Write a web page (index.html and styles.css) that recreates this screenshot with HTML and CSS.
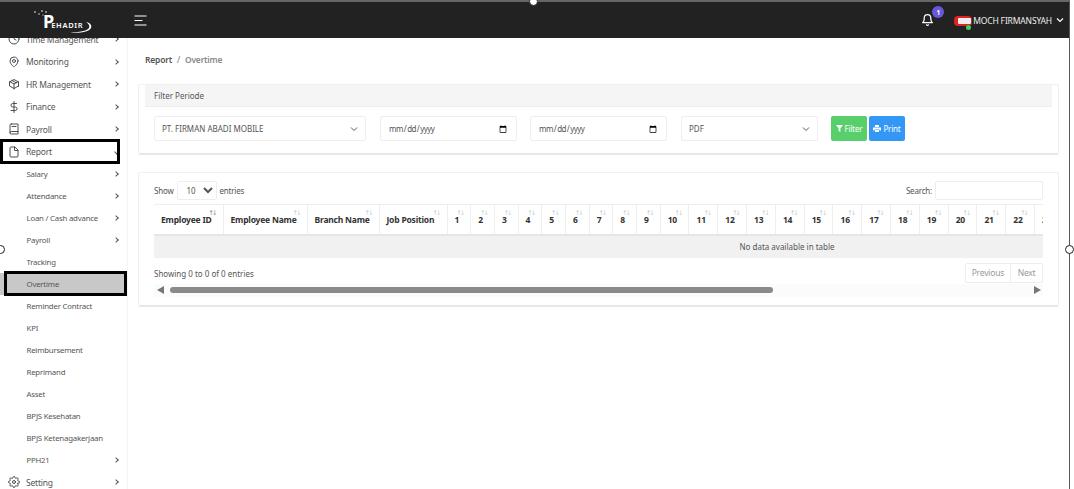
FILE: index.html
```html
<!DOCTYPE html>
<html lang="id">
<head>
<meta charset="utf-8">
<title>Report Overtime</title>
<link rel="stylesheet" href="styles.css">
</head>
<body>
<div class="frame">
  <div class="app">
    <header class="topbar">
      <div class="logo">
        <svg class="logo-art" width="62" height="28" viewBox="0 0 62 28"><g fill="#fff"><circle cx="2" cy="3" r=".8"/><circle cx="6" cy="5" r=".7"/><circle cx="9" cy="2" r=".8"/><circle cx="13" cy="3" r=".8"/><circle cx="10" cy="6" r=".6"/></g><path d="M53 13c5 1 6 4 5 6-2 4-10 5-21 5 9-1 17-2 19-5 1-2 0-4-3-6z" fill="#fff"/></svg>
        <span class="logo-p">P</span><span class="logo-text">EHADIR</span>
      </div>
      <svg class="burger" width="13" height="11" viewBox="0 0 13 11"><path d="M.5 1h12M.5 5.500h8M.5 10h12" stroke="#fff" stroke-width="1.200" fill="none"/></svg>
      <div class="top-right">
        <div class="bell">
          <svg width="13" height="14" viewBox="0 0 24 24" fill="none" stroke="#fff" stroke-width="2.200" stroke-linecap="round" stroke-linejoin="round"><path d="M18 8a6 6 0 0 0-12 0c0 7-3 9-3 9h18s-3-2-3-9"/><path d="M13.700 21a2 2 0 0 1-3.400 0"/></svg>
          <span class="badge">1</span>
        </div>
        <div class="avatar"><span class="avatar-in"></span><span class="avatar-dot"></span></div>
        <span class="user">MOCH FIRMANSYAH</span>
        <svg width="8" height="6" viewBox="0 0 8 6"><path d="M1 1.500l3 3 3-3" stroke="#fff" stroke-width="1.200" fill="none"/></svg>
      </div>
    </header>
    <div class="body">
      <nav class="sidebar">
        <ul class="menu">
          <li class="item"><svg class="ico" viewBox="0 0 24 24"><circle cx="12" cy="12" r="10"/><path d="M12 6v6l4 2"/></svg><span>Time Management</span><i class="chev"></i></li>
          <li class="item"><svg class="ico" viewBox="0 0 24 24"><path d="M20 10c0 6-8 12-8 12s-8-6-8-12a8 8 0 0 1 16 0z"/><circle cx="12" cy="10" r="3"/></svg><span>Monitoring</span><i class="chev"></i></li>
          <li class="item"><svg class="ico" viewBox="0 0 24 24"><path d="M21 16V8l-9-5-9 5v8l9 5 9-5z"/><path d="M3.300 7L12 12l8.700-5M12 22V12M7.500 4.500l9 5.200"/></svg><span>HR Management</span><i class="chev"></i></li>
          <li class="item"><svg class="ico" viewBox="0 0 24 24"><path d="M12 1v22M17 5H9.500a3.500 3.500 0 0 0 0 7h5a3.500 3.500 0 0 1 0 7H6"/></svg><span>Finance</span><i class="chev"></i></li>
          <li class="item"><svg class="ico" viewBox="0 0 24 24"><path d="M4 19.500A2.500 2.500 0 0 1 6.500 17H20"/><path d="M6.500 2H20v20H6.500A2.500 2.500 0 0 1 4 19.500v-15A2.500 2.500 0 0 1 6.500 2z"/><path d="M8 7h8"/></svg><span>Payroll</span><i class="chev"></i></li>
          <li class="item"><svg class="ico" viewBox="0 0 24 24"><path d="M13 2H6a2 2 0 0 0-2 2v16a2 2 0 0 0 2 2h12a2 2 0 0 0 2-2V9z"/><path d="M13 2v7h7"/></svg><span>Report</span><i class="chev chev-down"></i></li>
        </ul>
        <ul class="submenu">
          <li class="sub"><span>Salary</span><i class="chev"></i></li>
          <li class="sub"><span>Attendance</span><i class="chev"></i></li>
          <li class="sub"><span>Loan / Cash advance</span><i class="chev"></i></li>
          <li class="sub"><span>Payroll</span><i class="chev"></i></li>
          <li class="sub"><span>Tracking</span></li>
          <li class="sub active"><span>Overtime</span></li>
          <li class="sub"><span>Reminder Contract</span></li>
          <li class="sub"><span>KPI</span></li>
          <li class="sub"><span>Reimbursement</span></li>
          <li class="sub"><span>Reprimand</span></li>
          <li class="sub"><span>Asset</span></li>
          <li class="sub"><span>BPJS Kesehatan</span></li>
          <li class="sub"><span>BPJS Ketenagakerjaan</span></li>
          <li class="sub"><span>PPH21</span><i class="chev"></i></li>
        </ul>
        <ul class="menu">
          <li class="item"><svg class="ico" viewBox="0 0 24 24"><circle cx="12" cy="12" r="3"/><path d="M19.400 15a1.650 1.650 0 0 0 .33 1.820l.06.06a2 2 0 1 1-2.830 2.830l-.06-.06a1.650 1.650 0 0 0-2.820 1.170V21a2 2 0 0 1-4 0v-.09A1.650 1.650 0 0 0 7.260 19.700l-.06.06a2 2 0 1 1-2.830-2.830l.06-.06A1.650 1.650 0 0 0 3.260 14H3a2 2 0 0 1 0-4h.09A1.650 1.650 0 0 0 4.300 7.260l-.06-.06a2 2 0 1 1 2.830-2.830l.06.06A1.650 1.650 0 0 0 10 3.260V3a2 2 0 0 1 4 0v.09a1.650 1.650 0 0 0 2.820 1.170l.06-.06a2 2 0 1 1 2.830 2.830l-.06.06A1.650 1.650 0 0 0 20.740 10H21a2 2 0 0 1 0 4h-.09a1.650 1.650 0 0 0-1.510 1z"/></svg><span>Setting</span><i class="chev"></i></li>
        </ul>
      </nav>
      <main class="main">
        <div class="crumb"><b>Report</b><span class="sep">/</span><span class="crumb-cur">Overtime</span></div>
        <section class="card filter-card">
          <div class="card-head">Filter Periode</div>
          <form class="filters">
            <select class="field f-company"><option>PT. FIRMAN ABADI MOBILE</option></select>
            <input class="field f-date" type="date">
            <input class="field f-date" type="date">
            <select class="field f-format"><option>PDF</option></select>
            <div class="btns">
              <button type="button" class="btn btn-green"><svg width="7" height="7" viewBox="0 0 8 8"><path d="M0 0h8L5 3.600V8L3 6.800V3.600z" fill="#fff"/></svg>Filter</button>
              <button type="button" class="btn btn-blue"><svg width="8" height="7" viewBox="0 0 8 7"><path d="M2 0h4v2H2zM0 2.500h8V5.500H6.500V4.500h-5v1H0zM2 5h4v2H2z" fill="#fff"/></svg>Print</button>
            </div>
          </form>
        </section>
        <section class="card table-card">
          <div class="tbl-top">
            <label class="len">Show <select class="len-sel"><option>10</option></select> entries</label>
            <label class="search">Search: <input class="search-in" type="text"></label>
          </div>
          <div class="tbl-wrap">
            <div class="tbl-inner">
            <table class="tbl">
              <thead>
                <tr>
                  <th class="w-id">Employee ID<i class="sort sort-on">↑↓</i></th>
                  <th class="w-name">Employee Name<i class="sort">↑↓</i></th>
                  <th class="w-branch">Branch Name<i class="sort">↑↓</i></th>
                  <th class="w-job">Job Position<i class="sort">↑↓</i></th>
                  <th class="w-s">1<i class="sort">↑↓</i></th>
                  <th class="w-s">2<i class="sort">↑↓</i></th>
                  <th class="w-s">3<i class="sort">↑↓</i></th>
                  <th class="w-s">4<i class="sort">↑↓</i></th>
                  <th class="w-s">5<i class="sort">↑↓</i></th>
                  <th class="w-s">6<i class="sort">↑↓</i></th>
                  <th class="w-s">7<i class="sort">↑↓</i></th>
                  <th class="w-s">8<i class="sort">↑↓</i></th>
                  <th class="w-s">9<i class="sort">↑↓</i></th>
                  <th class="w-l">10<i class="sort">↑↓</i></th>
                  <th class="w-l">11<i class="sort">↑↓</i></th>
                  <th class="w-l">12<i class="sort">↑↓</i></th>
                  <th class="w-l">13<i class="sort">↑↓</i></th>
                  <th class="w-l">14<i class="sort">↑↓</i></th>
                  <th class="w-l">15<i class="sort">↑↓</i></th>
                  <th class="w-l">16<i class="sort">↑↓</i></th>
                  <th class="w-l">17<i class="sort">↑↓</i></th>
                  <th class="w-l">18<i class="sort">↑↓</i></th>
                  <th class="w-l">19<i class="sort">↑↓</i></th>
                  <th class="w-l">20<i class="sort">↑↓</i></th>
                  <th class="w-l">21<i class="sort">↑↓</i></th>
                  <th class="w-l">22<i class="sort">↑↓</i></th>
                  <th class="w-l">23<i class="sort">↑↓</i></th>
                </tr>
              </thead>
            </table>
            <div class="empty">No data available in table</div>
            </div>
          </div>
          <div class="tbl-bottom">
            <span class="info">Showing 0 to 0 of 0 entries</span>
            <div class="pager"><span class="pg">Previous</span><span class="pg">Next</span></div>
          </div>
          <div class="hscroll">
            <i class="tri tri-l"></i>
            <div class="track"><div class="thumb"></div></div>
            <i class="tri tri-r"></i>
          </div>
        </section>
      </main>
    </div>
  </div>
  <div class="mark mark-report"></div>
  <div class="mark mark-overtime"></div>
  <i class="handle h-top"></i>
  <i class="handle h-left"></i>
  <i class="handle h-right"></i>
</div>
</body>
</html>
```

FILE: styles.css
```css
* { box-sizing: border-box; }
html, body { margin: 0; padding: 0; background: #fff; }
body { font-family: "Noto Sans", "Open Sans", sans-serif; font-size: 8.5px; letter-spacing: -.2px; color: #555; }
ul { list-style: none; margin: 0; padding: 0; }

.frame { position: relative; width: 1074px; height: 489px; overflow: hidden; background: #fff; }
.app { width: 1070px; height: 489px; border-right: 1px solid #555; border-top: 2px solid #666; display: flex; flex-direction: column; }

.topbar { height: 36px; flex: none; background: #222; display: flex; align-items: center; position: relative; z-index: 2; }
.logo { position: relative; width: 134px; height: 36px; color: #fff; padding: 9px 0 0 43px; display: flex; align-items: baseline; flex: none; }
.logo-art { position: absolute; left: 33px; top: 7px; }
.logo-p { font-size: 18px; font-weight: 700; line-height: 20px; letter-spacing: -3px; }
.logo-text { font-size: 7.500px; letter-spacing: .7px; font-weight: 600; line-height: 20px; }
.burger { flex: none; }
.top-right { margin-left: auto; display: flex; align-items: center; padding-right: 5px; }
.bell { position: relative; width: 13px; height: 14px; margin-right: 20px; margin-top: 0; }
.bell svg { display: block; }
.badge { position: absolute; left: 11px; top: -7px; width: 12px; height: 12px; border-radius: 50%; background: #6658dd; color: #fff; font-size: 6.500px; font-weight: 700; display: flex; align-items: center; justify-content: center; }
.avatar { position: relative; width: 18px; height: 10px; border-radius: 4px; background: #d22; margin-right: 1px; margin-top: 1px; padding: 2px 1px 2px 4px; }
.avatar-in { display: block; height: 100%; background: #eee; border-radius: 1px; }
.avatar-dot { position: absolute; right: 1px; bottom: -4px; width: 5px; height: 5px; border-radius: 50%; background: #3ecf5a; }
.user { color: #eee; font-size: 8.500px; margin-right: 4px; letter-spacing: -.15px; }

.body { flex: 1; min-height: 0; display: flex; }
.sidebar { width: 128px; flex: none; overflow: hidden; border-right: 1px solid #f3f3f3; }
.menu:first-child { margin-top: -10px; }
.item { height: 22.500px; display: flex; align-items: center; padding: 0 8px 0 8px; color: #555; position: relative; }
.ico { width: 12px; height: 12px; fill: none; stroke: #444; stroke-width: 1.900; stroke-linecap: round; stroke-linejoin: round; margin-right: 6px; flex: none; }
.chev { width: 4px; height: 4px; margin-left: auto; margin-right: 1px; border-top: 1px solid #555; border-right: 1px solid #555; transform: rotate(45deg); flex: none; }
.chev-down { transform: rotate(135deg); margin-right: 0; }
.sub { height: 22px; display: flex; align-items: center; padding: 0 8px 0 26.500px; font-size: 7.800px; color: #555; }
.active { background: #c8c8c8; }

.main { flex: 1; min-width: 0; padding: 0 10px; }
.crumb { height: 46px; padding: 15px 0 0 7px; font-size: 8.500px; line-height: 14px; color: #555; }
.crumb b { font-weight: 600; }
.sep { margin: 0 5px; color: #777; }
.crumb-cur { color: #8a8a8a; font-weight: 600; }

.card { background: #fff; border: 1px solid #f0f0f0; border-bottom: 2px solid #e8e8e8; border-radius: 2px; }
.filter-card { height: 71px; padding: 0 6px; }
.card-head { height: 22px; background: #f5f5f5; border-bottom: 1px solid #eee; line-height: 21px; padding-left: 9px; font-size: 8px; letter-spacing: 0; color: #555; }
.filters { display: flex; align-items: flex-start; padding: 9px 0 0 9px; }
.field { height: 25px; border: 1px solid #eee; border-radius: 2px; background: #fff; font-family: inherit; font-size: 8px; color: #555; padding: 0 7px; margin: 0; outline: none; }
input.field { letter-spacing: -.6px; }
select.field { appearance: none; background-image: url("data:image/svg+xml,%3Csvg xmlns='http://www.w3.org/2000/svg' width='8' height='6'%3E%3Cpath d='M1 1.500l3 3 3-3' stroke='%23555' fill='none'/%3E%3C/svg%3E"); background-repeat: no-repeat; background-position: right 7px center; }
.f-company { width: 212px; margin-right: 14px; }
.f-date { width: 137px; margin-right: 13px; }
.f-format { width: 137px; margin-left: 1px; margin-right: 13px; }
.btns { display: flex; gap: 2px; }
.btn { width: 36px; height: 25px; border: 0; border-radius: 2px; color: #fff; font-family: inherit; font-size: 8px; letter-spacing: -.2px; padding: 0; display: flex; align-items: center; justify-content: center; gap: 2px; }
.btn-green { background: #58cf6b; }
.btn-blue { background: #3398f5; }

.table-card { margin-top: 17px; height: 135px; padding: 8px 15px 0; }
.tbl-top { height: 23px; display: flex; justify-content: space-between; align-items: flex-start; font-size: 8px; }
.len { display: flex; align-items: center; height: 19px; gap: 3px; }
.len-sel { width: 40px; height: 19px; border: 1px solid #eee; border-radius: 2px; background: #fff; font-family: inherit; font-size: 8px; color: #555; padding: 0 0 0 5px; margin: 0; }
.search { display: flex; align-items: center; height: 19px; gap: 3px; }
.search-in { width: 108px; height: 19px; border: 1px solid #eee; border-radius: 2px; padding: 0; margin: 0; }

.tbl-wrap { overflow: hidden; width: 889px; }
.tbl-inner { width: 1266px; }
.tbl { border-collapse: collapse; table-layout: fixed; width: 910px; }
.tbl th { position: relative; height: 30px; padding: 0 0 0 7px; text-align: left; font-size: 8.500px; font-weight: 700; color: #333; border-top: 1px solid #eee; border-bottom: 2px solid #e6e6e6; border-right: 1px solid #eee; white-space: nowrap; }
.w-id { width: 69px; }
.w-name { width: 84px; }
.w-branch { width: 72px; }
.w-job { width: 68px; }
.w-s { width: 23.700px; }
.w-l { width: 28.800px; }
.sort { position: absolute; right: 5px; top: 3px; font-family: "DejaVu Sans", sans-serif; font-size: 6.500px; line-height: 10px; font-style: normal; font-weight: 400; color: #ccc; letter-spacing: -2px; padding-right: 2px; }
.sort-on { color: #888; }
.empty { height: 22px; background: #f1f1f1; font-size: 8px; letter-spacing: 0; line-height: 22px; text-align: center; color: #555; }

.tbl-bottom { height: 26px; display: flex; justify-content: space-between; align-items: flex-start; padding-top: 5px; font-size: 8px; }
.info { line-height: 22px; letter-spacing: 0; }
.pager { display: flex; height: 20px; border: 1px solid #eee; border-radius: 2px; color: #999; }
.pg { display: flex; align-items: center; padding: 0 6px; font-size: 8.500px; }
.pg + .pg { border-left: 1px solid #eee; padding: 0 6.500px; }
.hscroll { height: 13px; margin-top: 0; display: flex; align-items: center; background: #fbfbfb; padding: 0 2px 0 3px; }
.tri { width: 0; height: 0; flex: none; border-top: 4px solid transparent; border-bottom: 4px solid transparent; }
.tri-l { border-right: 7px solid #777; }
.tri-r { border-left: 7px solid #777; }
.track { flex: 1; height: 6px; padding: 0 2px 0 6px; }
.thumb { width: 603px; height: 100%; background: #8a8a8a; border-radius: 3px; }

.mark { position: absolute; border: 3px solid #000; pointer-events: none; z-index: 3; }
.mark-report { left: 0; top: 139px; width: 120px; height: 25px; }
.mark-overtime { left: 4px; top: 271px; width: 123px; height: 25px; }
.handle { position: absolute; width: 9px; height: 9px; border: 1.500px solid #222; border-radius: 50%; background: #fff; z-index: 4; }
.h-top { left: 529px; top: -3px; }
.h-left { left: -4px; top: 245px; }
.h-right { left: 1065px; top: 245px; }
```
